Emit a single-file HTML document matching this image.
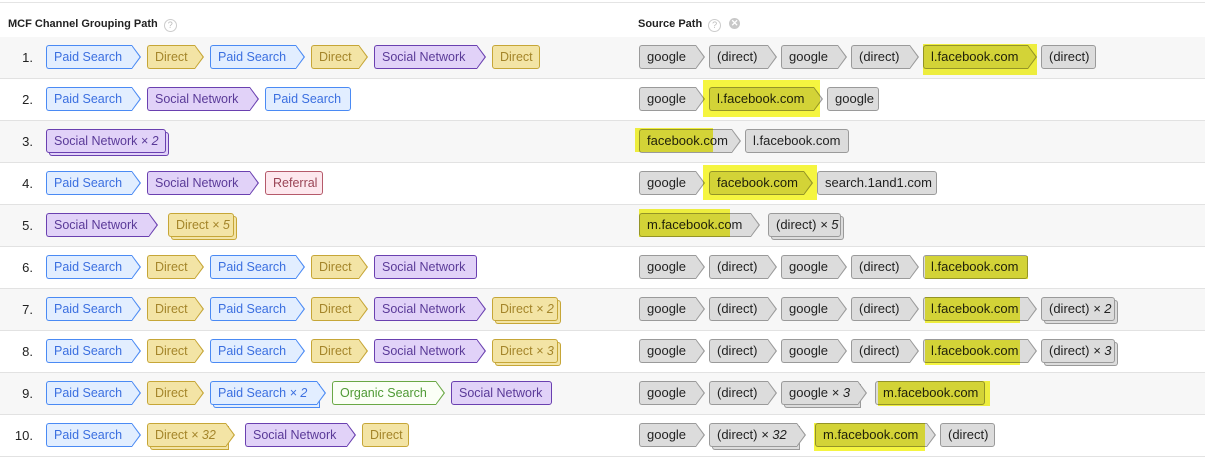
<!DOCTYPE html>
<html><head><meta charset="utf-8"><style>
*{margin:0;padding:0;box-sizing:border-box}
body{width:1205px;height:476px;background:#fff;font-family:"Liberation Sans",Arial,sans-serif;position:relative;overflow:hidden}
.top{position:absolute;left:0;top:2px;width:1205px;height:1px;background:#e4e4e4}
.hdr{position:absolute;top:3px;left:0;width:1205px;height:35px;border-bottom:1px solid #ddd;font-size:11px;font-weight:bold;color:#222}
.hdr span{position:absolute;top:15px}
.q{display:inline-block;width:13px;height:13px;border:1px solid #ccc;border-radius:50%;color:#bbb;font-size:9px;text-align:center;line-height:11px;font-weight:normal;margin-left:6px;vertical-align:-1px}
.x{display:inline-block;width:11px;height:11px;border-radius:50%;background:#c8c8c8;color:#fff;font-size:9px;text-align:center;line-height:11px;margin-left:8px;vertical-align:1px}
.row{position:absolute;left:0;width:1205px;height:42px;border-bottom:1px solid #e2e2e2}
.row.g{background:#f7f7f7}
.n{position:absolute;left:0;width:33px;top:0;line-height:42px;text-align:right;font-size:13px;color:#222}
.l{position:absolute;left:46px;top:8px;white-space:nowrap;display:flex}
.r{position:absolute;left:639px;top:8px;white-space:nowrap;display:flex}
.c{display:block;flex:none;position:relative;height:24px;line-height:22px;padding:0 7px;border:1px solid var(--b);background:var(--f);color:var(--t);border-radius:3px;font-size:12.5px;margin-right:15px;overflow:visible}
.r .c{font-size:13px;margin-right:13px}
.a{border-right:none;border-radius:3px 0 0 3px}
.a::before{content:"";position:absolute;top:-1px;right:-9px;width:9px;height:24px;background:var(--b);clip-path:polygon(0 0,100% 50%,0 100%)}
.a::after{content:"";position:absolute;top:0;right:-7.6px;width:8px;height:22px;background:var(--f);clip-path:polygon(0 0,100% 50%,0 100%)}
.s{box-shadow:3px 3px 0 -1px var(--f),3px 3px 0 0 var(--b)}
.ps{--b:#4a8af4;--f:#e2eeff;--t:#3b6fe0;width:86px}
.di{--b:#c6a637;--f:#f3e4a5;--t:#a4852a;width:48px}
.sn{--b:#6a40b0;--f:#e1d2f8;--t:#5a3a98;width:103px}
.rf{--b:#b55a6a;--f:#fde8ee;--t:#9a4555;width:58px}
.os{--b:#6aa845;--f:#fbfff6;--t:#4f9a35;width:104px}
.sr{--b:#9a9a9a;--f:#dcdcdc;--t:#222}
.go{width:57px}.dr{width:59px}.lf{width:105px}.fb{width:95px}.mf{width:112px}
i{font-style:italic}
.hl{position:absolute;background:#f5f540;mix-blend-mode:multiply;z-index:5}
</style></head><body>
<div class="top"></div>
<div class="hdr"><span style="left:8px">MCF Channel Grouping Path<span class="q" style="position:static">?</span></span><span style="left:638px">Source Path<span class="q" style="position:static">?</span><span class="x" style="position:static">✕</span></span></div>

<div class="row g" style="top:37px"><div class="n">1.</div>
<div class="l"><span class="c ps a">Paid Search</span><span class="c di a">Direct</span><span class="c ps a">Paid Search</span><span class="c di a">Direct</span><span class="c sn a">Social Network</span><span class="c di">Direct</span></div>
<div class="r"><span class="c sr go a">google</span><span class="c sr dr a">(direct)</span><span class="c sr go a">google</span><span class="c sr dr a">(direct)</span><span class="c sr lf a">l.facebook.com</span><span class="c sr" style="width:55px">(direct)</span></div></div>

<div class="row" style="top:79px"><div class="n">2.</div>
<div class="l"><span class="c ps a">Paid Search</span><span class="c sn a">Social Network</span><span class="c ps">Paid Search</span></div>
<div class="r"><span class="c sr go a">google</span><span class="c sr lf a">l.facebook.com</span><span class="c sr" style="width:52px">google</span></div></div>

<div class="row g" style="top:121px"><div class="n">3.</div>
<div class="l"><span class="c sn s" style="width:120px">Social Network <i>× 2</i></span></div>
<div class="r"><span class="c sr a" style="width:93px">facebook.com</span><span class="c sr" style="width:104px">l.facebook.com</span></div></div>

<div class="row" style="top:163px"><div class="n">4.</div>
<div class="l"><span class="c ps a">Paid Search</span><span class="c sn a">Social Network</span><span class="c rf">Referral</span></div>
<div class="r"><span class="c sr go a">google</span><span class="c sr fb a">facebook.com</span><span class="c sr" style="width:120px">search.1and1.com</span></div></div>

<div class="row g" style="top:205px"><div class="n">5.</div>
<div class="l"><span class="c sn a">Social Network</span><span class="c di s" style="width:66px;margin-left:4px">Direct <i>× 5</i></span></div>
<div class="r"><span class="c sr mf a">m.facebook.com</span><span class="c sr s" style="width:73px;margin-left:4px">(direct) <i>× 5</i></span></div></div>

<div class="row" style="top:247px"><div class="n">6.</div>
<div class="l"><span class="c ps a">Paid Search</span><span class="c di a">Direct</span><span class="c ps a">Paid Search</span><span class="c di a">Direct</span><span class="c sn">Social Network</span></div>
<div class="r"><span class="c sr go a">google</span><span class="c sr dr a">(direct)</span><span class="c sr go a">google</span><span class="c sr dr a">(direct)</span><span class="c sr lf">l.facebook.com</span></div></div>

<div class="row g" style="top:289px"><div class="n">7.</div>
<div class="l"><span class="c ps a">Paid Search</span><span class="c di a">Direct</span><span class="c ps a">Paid Search</span><span class="c di a">Direct</span><span class="c sn a">Social Network</span><span class="c di s" style="width:66px">Direct <i>× 2</i></span></div>
<div class="r"><span class="c sr go a">google</span><span class="c sr dr a">(direct)</span><span class="c sr go a">google</span><span class="c sr dr a">(direct)</span><span class="c sr lf a">l.facebook.com</span><span class="c sr s" style="width:74px">(direct) <i>× 2</i></span></div></div>

<div class="row" style="top:331px"><div class="n">8.</div>
<div class="l"><span class="c ps a">Paid Search</span><span class="c di a">Direct</span><span class="c ps a">Paid Search</span><span class="c di a">Direct</span><span class="c sn a">Social Network</span><span class="c di s" style="width:66px">Direct <i>× 3</i></span></div>
<div class="r"><span class="c sr go a">google</span><span class="c sr dr a">(direct)</span><span class="c sr go a">google</span><span class="c sr dr a">(direct)</span><span class="c sr lf a">l.facebook.com</span><span class="c sr s" style="width:74px">(direct) <i>× 3</i></span></div></div>

<div class="row g" style="top:373px"><div class="n">9.</div>
<div class="l"><span class="c ps a">Paid Search</span><span class="c di a">Direct</span><span class="c ps a s" style="width:107px">Paid Search <i>× 2</i></span><span class="c os a">Organic Search</span><span class="c sn" style="width:101px">Social Network</span></div>
<div class="r"><span class="c sr go a">google</span><span class="c sr dr a">(direct)</span><span class="c sr a s" style="width:77px">google <i>× 3</i></span><span class="c sr" style="width:110px;margin-left:4px">m.facebook.com</span></div></div>

<div class="row" style="top:415px"><div class="n">10.</div>
<div class="l"><span class="c ps a">Paid Search</span><span class="c di a s" style="width:79px;margin-right:19px">Direct <i>× 32</i></span><span class="c sn a" style="width:102px">Social Network</span><span class="c di" style="width:47px">Direct</span></div>
<div class="r"><span class="c sr go a">google</span><span class="c sr a s" style="width:88px;margin-right:18px">(direct) <i>× 32</i></span><span class="c sr mf a">m.facebook.com</span><span class="c sr" style="width:55px">(direct)</span></div></div>

<div class="hl" style="left:923px;top:44px;width:114px;height:31px"></div>
<div class="hl" style="left:703px;top:80px;width:117px;height:37px"></div>
<div class="hl" style="left:635px;top:128px;width:78px;height:24px"></div>
<div class="hl" style="left:703px;top:165px;width:114px;height:35px"></div>
<div class="hl" style="left:639px;top:209px;width:91px;height:28px"></div>
<div class="hl" style="left:925px;top:256px;width:103px;height:23px"></div>
<div class="hl" style="left:925px;top:297px;width:95px;height:26px"></div>
<div class="hl" style="left:925px;top:340px;width:95px;height:25px"></div>
<div class="hl" style="left:878px;top:381px;width:112px;height:25px"></div>
<div class="hl" style="left:814px;top:423px;width:111px;height:28px"></div>
</body></html>
